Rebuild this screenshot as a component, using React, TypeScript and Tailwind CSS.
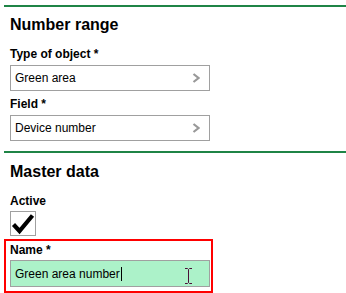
import React from "react";

function Chevron() {
  return (
    <svg width="8" height="10" viewBox="0 0 8 10" className="shrink-0">
      <polyline
        points="1.5,1 6.5,5 1.5,9"
        fill="none"
        stroke="#999999"
        strokeWidth="2.2"
      />
    </svg>
  );
}

function PickerField({ value }: { value: string }) {
  return (
    <div className="flex h-[26px] w-[200px] items-center justify-between border border-[#a0a0a0] bg-white pl-[4px] pr-[9px]">
      <span className="text-[12px] leading-[16px] text-black">{value}</span>
      <Chevron />
    </div>
  );
}

function Label({ children, className = "" }: { children: React.ReactNode; className?: string }) {
  return (
    <div className={`text-[12px] font-bold leading-[16px] text-black ${className}`}>
      {children}
    </div>
  );
}

export default function App() {
  return (
    <div
      className="h-[293px] w-[346px] overflow-hidden bg-white pt-[5px]"
      style={{ fontFamily: '"Liberation Sans", Arial, sans-serif' }}
    >
      <section className="ml-[4px] border-t-2 border-[#1f8446] pl-[6px]">
        <h2 className="mt-[8px] text-[16px] font-bold leading-[19px] text-black">
          Number range
        </h2>
        <Label className="mt-[12px]">Type of object *</Label>
        <div className="mt-[3px]">
          <PickerField value="Green area" />
        </div>
        <Label className="mt-[5px]">Field *</Label>
        <div className="mt-[3px]">
          <PickerField value="Device number" />
        </div>
      </section>

      <section className="ml-[4px] mt-[10px] border-t-2 border-[#1f8446] pl-[6px]">
        <h2 className="mt-[9px] text-[16px] font-bold leading-[19px] text-black">
          Master data
        </h2>
        <Label className="mt-[12px]">Active</Label>
        <div className="mt-[2px] flex h-[25px] w-[26px] items-center justify-center border border-[#a0a0a0] bg-white">
          <svg width="24" height="23" viewBox="0 0 24 23">
            <path
              d="M2.5 12.5 L8.5 19 L21.5 3.5"
              fill="none"
              stroke="#000"
              strokeWidth="4.2"
              strokeLinejoin="miter"
            />
          </svg>
        </div>

        <div className="-ml-[6px] mt-[3px] w-[209px] border-2 border-[#ff0000] pb-[4px] pl-[4px] pt-[1px]">
          <Label>Name *</Label>
          <div className="relative mt-[2px] flex h-[27px] w-[200px] items-center border border-[#a0a0a0] bg-[#acf2c9] pl-[4px]">
            <span className="text-[12px] leading-[16px] text-black">Green area number</span>
            <span className="ml-px h-[14px] w-px bg-black" />
            <svg
              className="absolute left-[173px] top-[7px]"
              width="9"
              height="16"
              viewBox="0 0 9 16"
            >
              <path
                d="M1 0.5 H3.5 L4.5 1.5 L5.5 0.5 H8 M4.5 1.5 V14.5 M1 15.5 H3.5 L4.5 14.5 L5.5 15.5 H8"
                fill="none"
                stroke="#4a1038"
                strokeWidth="1"
              />
            </svg>
          </div>
        </div>
      </section>
    </div>
  );
}
